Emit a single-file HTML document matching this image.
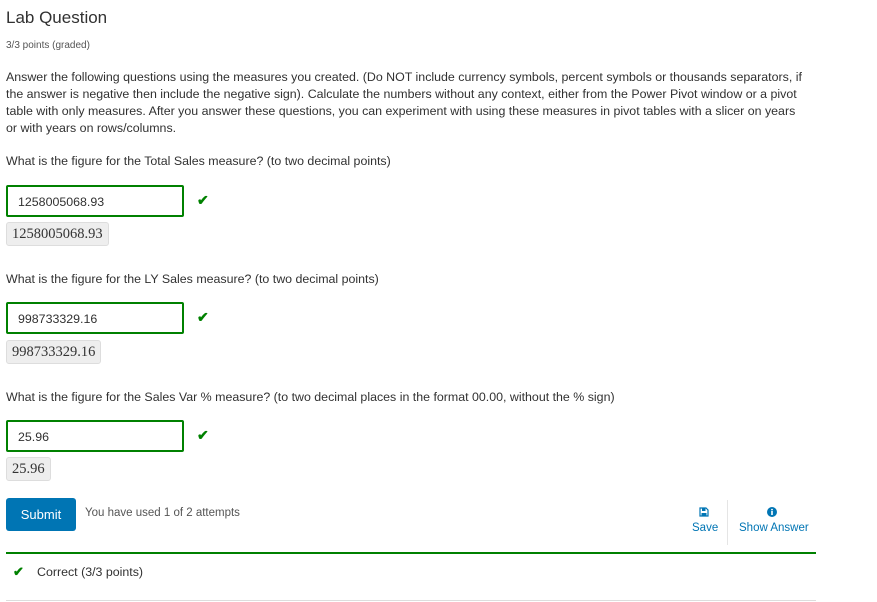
<!DOCTYPE html>
<html><head><meta charset="utf-8"><style>
body{margin:0;width:877px;height:602px;background:#fff;font-family:"Liberation Sans",sans-serif;color:#313131;position:relative;overflow:hidden}
.a{position:absolute;white-space:nowrap}
.t{font-size:12.4px}
.inp{position:absolute;left:6px;box-sizing:border-box;width:178px;height:32px;border:2px solid #008100;border-radius:2px;font-size:12.4px;padding:8px 0 0 10px;color:#313131}
.chk{position:absolute;left:197px;color:#008100;font-size:14px;font-weight:bold}
.disp{position:absolute;left:6px;height:24px;box-sizing:border-box;background:#eee;border:1px solid #ddd;border-radius:3px;font-family:"Liberation Serif",serif;font-size:14.5px;padding:3px 5px 0 5px;color:#333}
</style></head><body>
<div class="a" style="left:6px;top:8px;font-size:17px;color:#313131">Lab Question</div>
<div class="a" style="left:6px;top:40px;font-size:10px;color:#555">3/3 points (graded)</div>
<div class="a t" style="left:6px;top:69px;line-height:17px">Answer the following questions using the measures you created. (Do NOT include currency symbols, percent symbols or thousands separators, if<br>the answer is negative then include the negative sign). Calculate the numbers without any context, either from the Power Pivot window or a pivot<br>table with only measures. After you answer these questions, you can experiment with using these measures in pivot tables with a slicer on years<br>or with years on rows/columns.</div>
<div class="a t" style="left:6px;top:154px">What is the figure for the Total Sales measure? (to two decimal points)</div>
<div class="inp" style="top:185px">1258005068.93</div><div class="chk" style="top:192px">✔</div>
<div class="disp" style="top:222px">1258005068.93</div>
<div class="a t" style="left:6px;top:272px">What is the figure for the LY Sales measure? (to two decimal points)</div>
<div class="inp" style="top:302px">998733329.16</div><div class="chk" style="top:309px">✔</div>
<div class="disp" style="top:340px">998733329.16</div>
<div class="a t" style="left:6px;top:390px">What is the figure for the Sales Var % measure? (to two decimal places in the format 00.00, without the % sign)</div>
<div class="inp" style="top:420px">25.96</div><div class="chk" style="top:427px">✔</div>
<div class="disp" style="top:457px">25.96</div>
<div class="a" style="left:6px;top:498px;width:70px;height:33px;background:#0075b4;border-radius:3px;color:#fff;font-size:13px;text-align:center;line-height:33px">Submit</div>
<div class="a" style="left:85px;top:507px;font-size:11.5px;color:#555">You have used 1 of 2 attempts</div>
<svg class="a" style="left:699px;top:507px" width="10" height="10" viewBox="0 0 10 10"><path d="M1 1h6l2 2v6H1z" fill="none" stroke="#0075b4" stroke-width="1.2"/><rect x="3" y="1.5" width="3.5" height="2.5" fill="#0075b4"/><rect x="2.5" y="6" width="5" height="2.5" fill="#0075b4"/></svg>
<div class="a" style="left:692px;top:522px;font-size:11.5px;color:#0075b4">Save</div>
<div class="a" style="left:727px;top:500px;width:1px;height:45px;background:#e5e5e5"></div>
<svg class="a" style="left:767px;top:507px" width="10" height="10" viewBox="0 0 10 10"><circle cx="5" cy="5" r="5" fill="#0075b4"/><rect x="4.2" y="4" width="1.6" height="4" fill="#fff"/><circle cx="5" cy="2.6" r=".9" fill="#fff"/></svg>
<div class="a" style="left:739px;top:522px;font-size:11.5px;color:#0075b4">Show Answer</div>
<div class="a" style="left:6px;top:552px;width:810px;height:2px;background:#008100"></div>
<div class="a" style="left:13px;top:564px;font-size:13px;color:#008100;font-weight:bold">✔</div>
<div class="a t" style="left:37px;top:565px">Correct (3/3 points)</div>
<div class="a" style="left:6px;top:600px;width:810px;height:1px;background:#ddd"></div>
</body></html>
